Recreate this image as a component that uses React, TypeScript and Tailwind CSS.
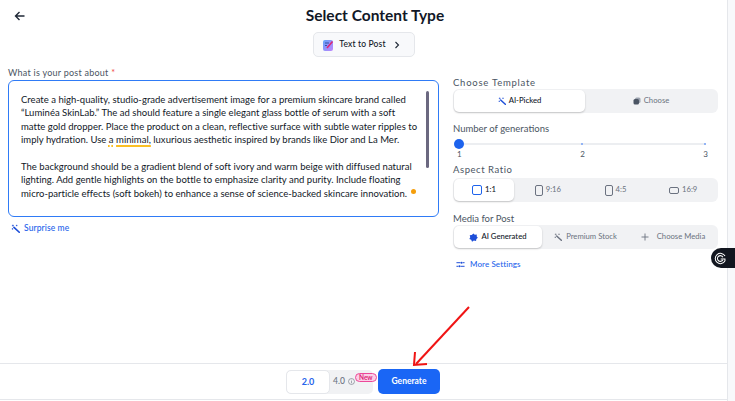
import React from "react";

const font = { fontFamily: '"Lato", "Liberation Sans", sans-serif' };

function Wand({ color = "#1d4ed8", size = 10 }: { color?: string; size?: number }) {
  return (
    <svg width={size} height={size} viewBox="0 0 12 12" fill="none">
      <path d="M4 4.5 L11 11" stroke={color} strokeWidth="2.2" strokeLinecap="round" />
      <path d="M2.5 0.8 V3.4 M1.2 2.1 H3.8 M7.5 1 V3 M6.5 2 H8.5 M1 6.5 H3 M2 5.5 V7.5" stroke={color} strokeWidth="0.9" />
    </svg>
  );
}

function Rect({ w, h, color }: { w: number; h: number; color: string }) {
  return <span className="block rounded-[2px] border-[1.5px]" style={{ width: w, height: h, borderColor: color }} />;
}

export default function App() {
  return (
    <div className="relative flex h-[401px] w-[735px] overflow-hidden bg-white text-[#1f2937]" style={font}>
      <div className="flex h-full w-[728px] flex-col border-r border-[#e5e7eb]">
        <div className="flex h-[363px] flex-col">
          <div className="relative flex h-[32px] items-center justify-center pl-[23px]">
            <svg className="absolute left-[14px] top-[10px]" width="12" height="12" viewBox="0 0 12 12" fill="none">
              <path d="M10.5 6 H1.8 M5.5 2 L1.5 6 L5.5 10" stroke="#1f2937" strokeWidth="1.4" />
            </svg>
            <h1 className="text-[15.5px] font-bold leading-none text-[#111827]">Select Content Type</h1>
          </div>
          <div className="flex justify-center">
            <div className="flex h-[25px] w-[102px] items-center justify-center gap-[5px] rounded-[5px] border border-[#e5e7eb] bg-[#f8f9fb] pr-[3px] text-[8.5px] font-medium tracking-[0.15px] text-[#111827]">
              <svg width="11" height="12" viewBox="0 0 11 12" fill="none">
                <defs>
                  <linearGradient id="note" x1="0" y1="0" x2="1" y2="1">
                    <stop offset="0" stopColor="#60a5fa" />
                    <stop offset="1" stopColor="#c084fc" />
                  </linearGradient>
                </defs>
                <rect x="0" y="1" width="10" height="11" rx="2" fill="url(#note)" />
                <path d="M2 4 H6 M2 6.5 H4" stroke="#1e3a8a" strokeWidth="0.8" />
                <path d="M4 9 L9.5 2.5" stroke="#db2777" strokeWidth="1.6" />
              </svg>
              <span>Text to Post</span>
              <svg className="ml-[2px]" width="8" height="8" viewBox="0 0 8 8" fill="none">
                <path d="M2.5 1 L5.5 4 L2.5 7" stroke="#1f2937" strokeWidth="1.1" />
              </svg>
            </div>
          </div>
          <div className="mt-[10px] flex">
            <div className="ml-[8px] w-[431px]">
              <div className="text-[9px] leading-[12px] tracking-[0.25px] text-[#4b5563]">
                What is your post about <span className="text-[#ef4444]">*</span>
              </div>
              <div className="relative mt-[1px] h-[137px] rounded-[6px] border border-[#2f7bf6] px-[12px] pt-[12px] text-[9.5px] leading-[13.4px] tracking-[0.02px] text-[#111827]">
                <p className="whitespace-nowrap">
                  Create a high-quality, studio-grade advertisement image for a premium skincare brand called<br />
                  “Luminéa SkinLab.” The ad should feature a single elegant glass bottle of serum with a soft<br />
                  matte gold dropper. Place the product on a clean, reflective surface with subtle water ripples to<br />
                  imply hydration. Use <span className="underline decoration-dotted decoration-[#fbbf24] decoration-[1.5px] underline-offset-2">a</span> <span className="underline decoration-[#fbbf24] decoration-[1.5px] underline-offset-2">minimal,</span> luxurious aesthetic inspired by brands like Dior and La Mer.
                </p>
                <p className="mt-[13.4px] whitespace-nowrap">
                  The background should be a gradient blend of soft ivory and warm beige with diffused natural<br />
                  lighting. Add gentle highlights on the bottle to emphasize clarity and purity. Include floating<br />
                  micro-particle effects (soft bokeh) to enhance a sense of science-backed skincare innovation.
                </p>
                <span className="absolute right-[9px] top-[10px] h-[77px] w-[3px] rounded-full bg-[#6b6880]" />
                <span className="absolute right-[22px] top-[108px] h-[5px] w-[5px] rounded-full bg-[#f59e0b]" />
              </div>
              <div className="ml-[3px] mt-[5px] flex items-center gap-[4px] text-[8.5px] font-medium tracking-[0.1px] text-[#2563eb]">
                <Wand size={9} />
                Surprise me
              </div>
            </div>
            <div className="ml-[14px] flex w-[265px] flex-col pt-[10px]">
              <div className="text-[9.5px] leading-[12px] tracking-[0.75px] text-[#4b5563]">Choose Template</div>
              <div className="flex h-[24px] rounded-[6px] bg-[#f1f2f4] p-[1px]">
                <div className="flex w-[131px] items-center justify-center gap-[3px] rounded-[5px] bg-white text-[7.7px] font-medium text-[#111827] shadow-[0_1px_2px_rgba(0,0,0,0.2)]">
                  <Wand size={8} />
                  AI-Picked
                </div>
                <div className="flex flex-1 items-center justify-center gap-[3px] text-[7.7px] text-[#6b7280]">
                  <svg width="8" height="8" viewBox="0 0 8 8"><rect x="2" y="0.5" width="5.5" height="5.5" rx="1.5" fill="#9ca3af" /><rect x="0.5" y="2" width="5.5" height="5.5" rx="1.5" fill="#4b5563" /></svg>
                  Choose
                </div>
              </div>
              <div className="mt-[10px] text-[9.5px] leading-[12px] text-[#4b5563]">Number of generations</div>
              <div className="relative mt-[4px] h-[14px]">
                <div className="absolute left-[6px] right-[12px] top-[4px] h-[2px] bg-[#eceef1]" />
                <span className="absolute left-[1px] top-[0px] h-[10px] w-[10px] rounded-full bg-[#1d63ed]" />
                <span className="absolute left-[128px] top-[4px] h-[2px] w-[2px] bg-[#93b4f5]" />
                <span className="absolute left-[251px] top-[4px] h-[2px] w-[2px] bg-[#93b4f5]" />
              </div>
              <div className="-mt-[4px] flex justify-between pl-[4px] pr-[10px] text-[8px] leading-[10px] text-[#4b5563]">
                <span>1</span>
                <span>2</span>
                <span>3</span>
              </div>
              <div className="mt-[5px] text-[9.5px] leading-[12px] tracking-[0.55px] text-[#4b5563]">Aspect Ratio</div>
              <div className="mt-[2px] flex h-[24px] rounded-[6px] bg-[#f1f2f4] p-[1px] text-[7.7px]">
                <div className="flex w-[60px] items-center justify-center gap-[3px] rounded-[5px] bg-white font-medium text-[#111827] shadow-[0_1px_2px_rgba(0,0,0,0.2)]">
                  <Rect w={10} h={10} color="#1d63ed" />
                  1:1
                </div>
                <div className="flex flex-1 items-center justify-center gap-[3px] text-[#6b7280]">
                  <Rect w={8} h={11} color="#6b7280" />
                  9:16
                </div>
                <div className="flex flex-1 items-center justify-center gap-[3px] text-[#6b7280]">
                  <Rect w={8} h={11} color="#6b7280" />
                  4:5
                </div>
                <div className="flex flex-1 items-center justify-center gap-[3px] text-[#6b7280]">
                  <Rect w={10} h={7} color="#6b7280" />
                  16:9
                </div>
              </div>
              <div className="mt-[11px] text-[9.5px] leading-[12px] text-[#4b5563]">Media for Post</div>
              <div className="flex h-[24px] rounded-[6px] bg-[#f1f2f4] p-[1px] text-[7.7px]">
                <div className="flex w-[88px] items-center justify-center gap-[3px] rounded-[5px] bg-white font-medium text-[#111827] shadow-[0_1px_2px_rgba(0,0,0,0.2)]">
                  <svg width="9" height="9" viewBox="0 0 10 10"><path d="M5 0.5 L6.4 2 L8.6 1.6 L8.6 3.8 L9.8 5.4 L8.2 6.6 L7.8 8.8 L5.4 8.4 L3.4 9.6 L2.4 7.6 L0.4 6.6 L1.4 4.6 L0.8 2.4 L3 2.2 Z" fill="#1d4ed8" /></svg>
                  AI Generated
                </div>
                <div className="flex w-[87px] items-center justify-center gap-[4px] text-[#6b7280]">
                  <Wand color="#6b7280" size={8} />
                  Premium Stock
                </div>
                <div className="flex flex-1 items-center justify-center gap-[8px] text-[#6b7280]">
                  <svg width="8" height="8" viewBox="0 0 8 8"><path d="M4 0.5 V7.5 M0.5 4 H7.5" stroke="#6b7280" strokeWidth="0.9" /></svg>
                  Choose Media
                </div>
              </div>
              <div className="ml-[3px] mt-[9px] flex items-center gap-[5px] text-[8px] font-medium tracking-[0.1px] text-[#2563eb]">
                <svg width="9" height="9" viewBox="0 0 10 10"><path d="M0.5 3 H5 M7.5 3 H9.5 M0.5 7 H2.5 M5 7 H9.5" stroke="#1d4ed8" strokeWidth="1.1" /><circle cx="6.2" cy="3" r="1.1" fill="#1d4ed8" /><circle cx="3.8" cy="7" r="1.1" fill="#1d4ed8" /></svg>
                More Settings
              </div>
            </div>
          </div>
        </div>
        <div className="flex h-[37px] items-center border-y border-[#e5e7eb] pl-[286px]">
          <div className="flex h-[24px] w-[87px] items-center rounded-[5px] bg-[#f1f2f4]">
            <div className="flex h-[24px] w-[44px] items-center justify-center rounded-[5px] border border-[#e5e7eb] bg-white text-[9px] font-bold text-[#2563eb]">2.0</div>
            <span className="ml-[3px] text-[8.5px] font-medium text-[#6b7280]">4.0</span>
            <svg className="ml-[3px]" width="7" height="7" viewBox="0 0 8 8" fill="none"><circle cx="4" cy="4" r="3.4" stroke="#6b7280" strokeWidth="0.7" /><path d="M4 3.5 V6 M4 2 V2.8" stroke="#6b7280" strokeWidth="0.7" /></svg>
          </div>
          <button className="ml-[5px] h-[25px] w-[62px] rounded-[5px] bg-[#1a66f5] text-[8.5px] font-bold text-white">Generate</button>
        </div>
      </div>
      <div className="flex-1 bg-[#f8f9fb]" />

      <span className="absolute left-[355px] top-[373px] rounded-full border border-[#ec4899] bg-[#fbcfe8] px-[3px] text-[6.5px] font-bold leading-[7px] text-[#db2777]">New</span>

      <div className="absolute left-[711px] top-[248px] flex h-[20px] w-[24px] items-center rounded-l-full bg-[#12161f] pl-[3px]">
        <svg width="13" height="13" viewBox="0 0 14 14" fill="none">
          <path d="M11.8 9.8 A5.6 5.6 0 1 1 11.8 4.2" stroke="#fff" strokeWidth="1.1" />
          <path d="M9.6 8.4 A3.1 3.1 0 1 1 9.6 5.6" stroke="#fff" strokeWidth="1.1" />
          <path d="M7.2 7.6 H11.8 V9.8" stroke="#fff" strokeWidth="1.1" />
        </svg>
      </div>

      <svg className="absolute left-[410px] top-[304px]" width="62" height="64" viewBox="0 0 62 64" fill="none">
        <path d="M59 3 L6 60" stroke="#f01414" strokeWidth="2" />
        <path d="M5 48 L4 61 L17 60" stroke="#f01414" strokeWidth="2" />
      </svg>
    </div>
  );
}
